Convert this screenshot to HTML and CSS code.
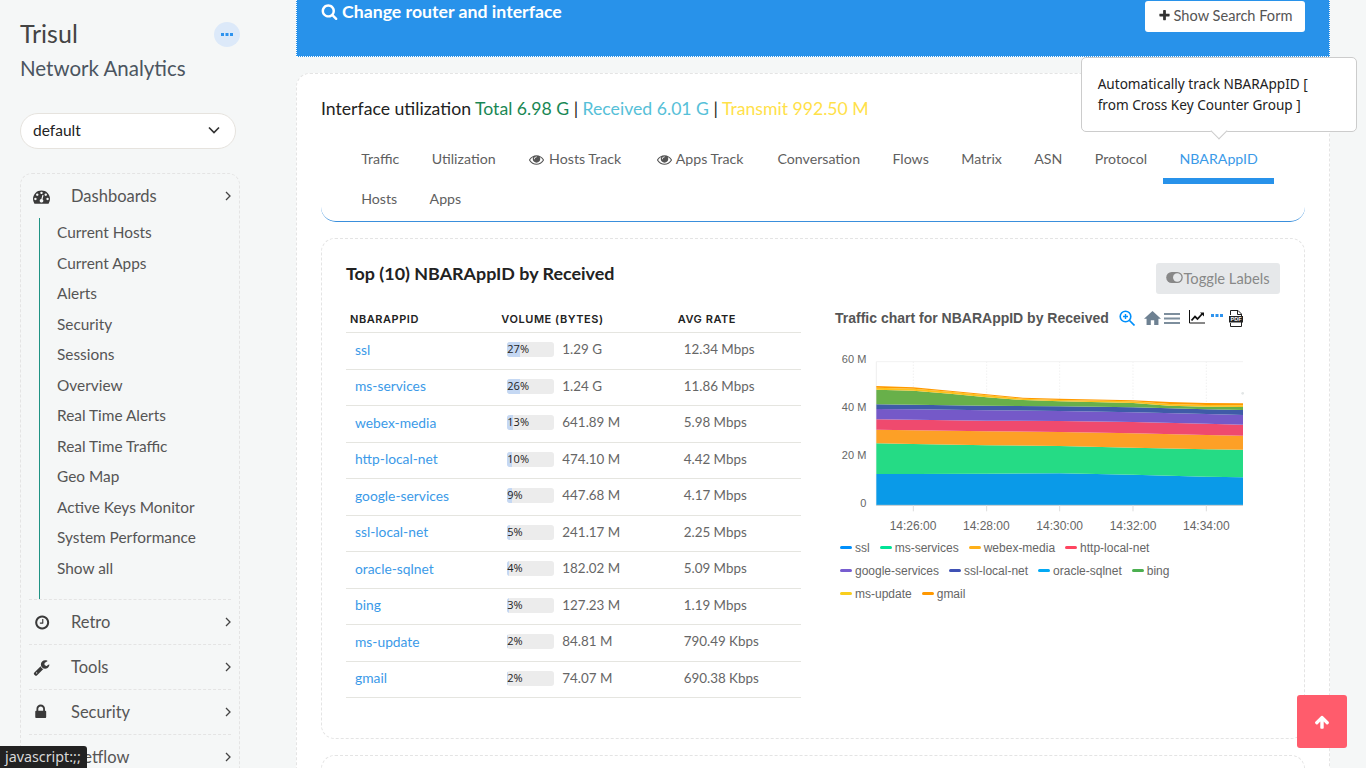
FILE: index.html
```html
<!DOCTYPE html>
<html lang="en">
<head>
  <meta charset="UTF-8" />
  <meta name="viewport" content="width=device-width, initial-scale=1.0" />
  <title>Trisul Network Analytics</title>
  <link rel="stylesheet" href="styles.css">
</head>
<body>
  <aside class="sidebar">
    <div class="brand">
      <div>
        <div class="brand-name">Trisul</div>
        <div class="brand-sub">Network Analytics</div>
      </div>
      <span class="more-btn"><svg viewBox="0 0 12 4" width="12" height="4"><path d="M0 0h3v3H0zM4.500 0h3v3h-3zM9 0h3v3H9z"/></svg></span>
    </div>

    <div class="context-select">
      <span>default</span>
      <svg viewBox="0 0 12 8" width="12" height="8"><path d="M1 1.500l5 5 5-5" fill="none" stroke="#333" stroke-width="1.700"/></svg>
    </div>

    <nav class="menu">
      <div class="menu-group">
        <a class="menu-row" href="#">
          <svg class="menu-icon" viewBox="0 0 1792 1792"><path d="M384 1152q0-53-37.500-90.500t-90.500-37.500-90.500 37.500-37.500 90.500 37.500 90.500 90.500 37.500 90.500-37.500 37.500-90.500zm192-448q0-53-37.500-90.500t-90.500-37.500-90.500 37.500-37.500 90.500 37.500 90.500 90.500 37.500 90.500-37.500 37.500-90.500zm428 481l101-382q6-26-7.500-48.500t-38.500-29.500-48 6.500-30 39.500l-101 382q-60 5-107 43.500t-63 98.500q-20 77 20 146t117 89 146-20 89-117q16-60-6-117t-72-91zm660-33q0-53-37.500-90.500t-90.500-37.500-90.500 37.500-37.500 90.500 37.500 90.500 90.500 37.500 90.500-37.500 37.500-90.500zm-640-640q0-53-37.500-90.500t-90.500-37.500-90.500 37.500-37.500 90.500 37.500 90.500 90.500 37.500 90.500-37.500 37.500-90.500zm448 192q0-53-37.500-90.500t-90.500-37.500-90.500 37.500-37.500 90.500 37.500 90.500 90.500 37.500 90.500-37.500 37.500-90.500zm320 448q0 261-141 483-19 29-54 29h-1402q-35 0-54-29-141-221-141-483 0-182 71-348t191-286 286-191 348-71 348 71 286 191 191 286 71 348z"/></svg>
          <span class="menu-label">Dashboards</span>
          <svg class="chevron" viewBox="0 0 6 10"><path d="M1 1l4 4-4 4" fill="none" stroke="#444" stroke-width="1.300"/></svg>
        </a>
        <ul class="submenu">
          <li>Current Hosts</li>
          <li>Current Apps</li>
          <li>Alerts</li>
          <li>Security</li>
          <li>Sessions</li>
          <li>Overview</li>
          <li>Real Time Alerts</li>
          <li>Real Time Traffic</li>
          <li>Geo Map</li>
          <li>Active Keys Monitor</li>
          <li>System Performance</li>
          <li>Show all</li>
        </ul>
      </div>
      <div class="menu-group">
        <a class="menu-row" href="#">
          <svg class="menu-icon" viewBox="-110 -36 1865 1865"><path d="M1024 544v448q0 14-9 23t-23 9h-320q-14 0-23-9t-9-23v-64q0-14 9-23t23-9h224v-352q0-14 9-23t23-9h64q14 0 23 9t9 23zm416 352q0-148-73-273t-198-198-273-73-273 73-198 198-73 273 73 273 198 198 273 73 273-73 198-198 73-273zm224 0q0 209-103 385.500t-279.500 279.500-385.500 103-385.500-103-279.500-279.500-103-385.500 103-385.500 279.500-279.500 385.500-103 385.500 103 279.500 279.500 103 385.500z"/></svg>
          <span class="menu-label">Retro</span>
          <svg class="chevron" viewBox="0 0 6 10"><path d="M1 1l4 4-4 4" fill="none" stroke="#444" stroke-width="1.300"/></svg>
        </a>
      </div>
      <div class="menu-group">
        <a class="menu-row" href="#">
          <svg class="menu-icon" viewBox="0 0 1792 1792"><path d="M448 1472q0-26-19-45t-45-19-45 19-19 45 19 45 45 19 45-19 19-45zm644-420l-682 682q-37 37-90 37-52 0-91-37l-106-108q-38-36-38-90 0-53 38-91l681-681q39 98 114.500 173.500t173.500 114.500zm634-435q0 39-23 106-47 134-164.500 217.500t-258.500 83.500q-185 0-316.500-131.500t-131.500-316.500 131.500-316.500 316.500-131.500q58 0 121.500 16.500t107.500 46.500q16 11 16 28t-16 28l-293 169v224l193 107q5-3 79-48.500t135.500-81 70.500-35.500q15 0 23.500 10t8.500 25z"/></svg>
          <span class="menu-label">Tools</span>
          <svg class="chevron" viewBox="0 0 6 10"><path d="M1 1l4 4-4 4" fill="none" stroke="#444" stroke-width="1.300"/></svg>
        </a>
      </div>
      <div class="menu-group">
        <a class="menu-row" href="#">
          <svg class="menu-icon" viewBox="90 0 1536 1792"><path d="M520 704h512v-192q0-106-75-181t-181-75-181 75-75 181v192zm832 96v576q0 40-28 68t-68 28h-960q-40 0-68-28t-28-68v-576q0-40 28-68t68-28h32v-192q0-184 132-316t316-132 316 132 132 316v192h32q40 0 68 28t28 68z"/></svg>
          <span class="menu-label">Security</span>
          <svg class="chevron" viewBox="0 0 6 10"><path d="M1 1l4 4-4 4" fill="none" stroke="#444" stroke-width="1.300"/></svg>
        </a>
      </div>
      <div class="menu-group">
        <a class="menu-row" href="#">
          <span class="menu-icon"></span>
          <span class="menu-label">Netflow</span>
          <svg class="chevron" viewBox="0 0 6 10"><path d="M1 1l4 4-4 4" fill="none" stroke="#444" stroke-width="1.300"/></svg>
        </a>
      </div>
    </nav>
  </aside>

  <main class="content">
    <section class="search-bar">
      <h2 class="search-title">
        <svg viewBox="0 0 1792 1792" width="17" height="17"><path d="M1216 832q0-185-131.500-316.500t-316.500-131.500-316.500 131.500-131.500 316.500 131.500 316.500 316.500 131.500 316.500-131.500 131.500-316.500zm512 832q0 52-38 90t-90 38q-54 0-90-38l-343-342q-179 124-399 124-143 0-273.500-55.500t-225-150-150-225-55.500-273.500 55.500-273.500 150-225 225-150 273.500-55.500 273.500 55.500 225 150 150 225 55.500 273.500q0 220-124 399l343 343q37 37 37 90z"/></svg>
        Change router and interface
      </h2>
      <button class="search-btn">
        <svg viewBox="0 0 1792 1792" width="13" height="13"><path d="M1600 736v192q0 40-28 68t-68 28h-416v416q0 40-28 68t-68 28h-192q-40 0-68-28t-28-68v-416h-416q-40 0-68-28t-28-68v-192q0-40 28-68t68-28h416v-416q0-40 28-68t68-28h192q40 0 68 28t28 68v416h416q40 0 68 28t28 68z"/></svg>
        Show Search Form
      </button>
    </section>

    <section class="panel">
      <h3 class="util-line">Interface utilization <span class="util-total">Total 6.98 G</span> | <span class="util-recv">Received 6.01 G</span> | <span class="util-xmit">Transmit 992.50 M</span></h3>

      <div class="tabs">
        <a class="tab" href="#">Traffic</a>
        <a class="tab" href="#">Utilization</a>
        <a class="tab tab-track" href="#"><svg class="eye" viewBox="0 0 1792 1792"><path d="M1664 960q-152-236-381-353 61 104 61 225 0 185-131.500 316.500t-316.500 131.500-316.500-131.500-131.500-316.500q0-121 61-225-229 117-381 353 133 205 333.500 326.500t434.500 121.500 434.500-121.500 333.500-326.500zm-720-384q0-20-14-34t-34-14q-125 0-214.500 89.500t-89.500 214.500q0 20 14 34t34 14 34-14 14-34q0-86 61-147t147-61q20 0 34-14t14-34zm848 384q0 34-20 69-140 230-376.500 368.500t-499.500 138.500-499.500-139-376.500-368q-20-35-20-69t20-69q140-229 376.500-368t499.500-139 499.500 139 376.500 368q20 35 20 69z"/></svg> Hosts Track</a>
        <a class="tab tab-track" href="#"><svg class="eye" viewBox="0 0 1792 1792"><path d="M1664 960q-152-236-381-353 61 104 61 225 0 185-131.500 316.500t-316.500 131.500-316.500-131.500-131.500-316.500q0-121 61-225-229 117-381 353 133 205 333.500 326.500t434.500 121.500 434.500-121.500 333.500-326.500zm-720-384q0-20-14-34t-34-14q-125 0-214.500 89.500t-89.500 214.500q0 20 14 34t34 14 34-14 14-34q0-86 61-147t147-61q20 0 34-14t14-34zm848 384q0 34-20 69-140 230-376.500 368.500t-499.500 138.500-499.500-139-376.500-368q-20-35-20-69t20-69q140-229 376.500-368t499.500-139 499.500 139 376.500 368q20 35 20 69z"/></svg> Apps Track</a>
        <a class="tab" href="#">Conversation</a>
        <a class="tab" href="#">Flows</a>
        <a class="tab" href="#">Matrix</a>
        <a class="tab" href="#">ASN</a>
        <a class="tab" href="#">Protocol</a>
        <a class="tab active" href="#">NBARAppID
          <span class="popover">Automatically track NBARAppID [ from Cross Key Counter Group ]</span>
        </a>
        <a class="tab" href="#">Hosts</a>
        <a class="tab" href="#">Apps</a>
      </div>

      <div class="card">
        <div class="card-head">
          <h4 class="card-title">Top (10) NBARAppID by Received</h4>
          <button class="toggle-btn">
            <svg viewBox="0 0 18 12" width="17" height="11"><path d="M6 0h6a6 6 0 0 1 0 12H6A6 6 0 0 1 6 0z" fill="#888"/><circle cx="12" cy="6" r="4.600" fill="#e6e8ea"/></svg>Toggle Labels
          </button>
        </div>

        <div class="card-body">
          <table class="top-table">
            <thead>
              <tr><th>NBARAppID</th><th>Volume (Bytes)</th><th>Avg Rate</th></tr>
            </thead>
            <tbody>
              <tr><td><a href="#">ssl</a></td><td><div class="vol"><div class="bar"><div class="bar-fill" style="width:27%"></div><span class="bar-text">27%</span></div>1.29 G</div></td><td>12.34 Mbps</td></tr>
              <tr><td><a href="#">ms-services</a></td><td><div class="vol"><div class="bar"><div class="bar-fill" style="width:26%"></div><span class="bar-text">26%</span></div>1.24 G</div></td><td>11.86 Mbps</td></tr>
              <tr><td><a href="#">webex-media</a></td><td><div class="vol"><div class="bar"><div class="bar-fill" style="width:13%"></div><span class="bar-text">13%</span></div>641.89 M</div></td><td>5.98 Mbps</td></tr>
              <tr><td><a href="#">http-local-net</a></td><td><div class="vol"><div class="bar"><div class="bar-fill" style="width:10%"></div><span class="bar-text">10%</span></div>474.10 M</div></td><td>4.42 Mbps</td></tr>
              <tr><td><a href="#">google-services</a></td><td><div class="vol"><div class="bar"><div class="bar-fill" style="width:9%"></div><span class="bar-text">9%</span></div>447.68 M</div></td><td>4.17 Mbps</td></tr>
              <tr><td><a href="#">ssl-local-net</a></td><td><div class="vol"><div class="bar"><div class="bar-fill" style="width:5%"></div><span class="bar-text">5%</span></div>241.17 M</div></td><td>2.25 Mbps</td></tr>
              <tr><td><a href="#">oracle-sqlnet</a></td><td><div class="vol"><div class="bar"><div class="bar-fill" style="width:4%"></div><span class="bar-text">4%</span></div>182.02 M</div></td><td>5.09 Mbps</td></tr>
              <tr><td><a href="#">bing</a></td><td><div class="vol"><div class="bar"><div class="bar-fill" style="width:3%"></div><span class="bar-text">3%</span></div>127.23 M</div></td><td>1.19 Mbps</td></tr>
              <tr><td><a href="#">ms-update</a></td><td><div class="vol"><div class="bar"><div class="bar-fill" style="width:2%"></div><span class="bar-text">2%</span></div>84.81 M</div></td><td>790.49 Kbps</td></tr>
              <tr><td><a href="#">gmail</a></td><td><div class="vol"><div class="bar"><div class="bar-fill" style="width:2%"></div><span class="bar-text">2%</span></div>74.07 M</div></td><td>690.38 Kbps</td></tr>
            </tbody>
          </table>

          <div class="chart-box">
            <div class="chart-head">
              <span class="chart-title">Traffic chart for NBARAppID by Received</span>
              <svg class="tool tool-zoom" viewBox="0 0 16 16"><circle cx="6.500" cy="6.500" r="5.300" fill="none" stroke="#008ffb" stroke-width="1.600"/><path d="M10.500 10.500L15.500 15.500" stroke="#008ffb" stroke-width="1.700"/><path d="M4 6.500h5M6.500 4v5" stroke="#008ffb" stroke-width="1.400"/></svg>
              <svg class="tool tool-home" viewBox="2 3 20 17"><path d="M10 20v-6h4v6h5v-8h3L12 3 2 12h3v8z" fill="#6e8192"/></svg>
              <svg class="tool tool-bars" viewBox="0 0 16 13"><path d="M0 1h16v2H0zM0 5.500h16v2H0zM0 10h16v2H0z" fill="#7d8e9d"/></svg>
              <svg class="tool tool-line" viewBox="0 0 16 14"><path d="M.500 0v13H16" fill="none" stroke="#111" stroke-width="1"/><path d="M2.500 10.500L6 6.500l2.500 2.500 5-5.500" fill="none" stroke="#111" stroke-width="1.800"/><path d="M11 2.500h4v4z" fill="#111"/></svg>
              <svg class="tool tool-dots" viewBox="0 0 12 4"><path d="M0 0h3v3H0zM4.500 0h3v3h-3zM9 0h3v3H9z" fill="#2e93ee"/></svg>
              <svg class="tool tool-pdf" viewBox="0 0 14 17"><path d="M1.500 5V.500h7.500l3.500 3.500v12.500h-11V13" fill="none" stroke="#222"/><path d="M8.500.500V4.500h4" fill="none" stroke="#222"/><rect x="0" y="6" width="14" height="6.500" fill="#222"/><text x="7" y="11.300" class="pdf-text">PDF</text></svg>
            </div>

            <svg class="chart" viewBox="0 120 1290 585">
              <g class="grid-v">
                <path d="M265 185V616M485 185V616M704 185V616M924 185V616M1144 185V616"/>
              </g>
              <path d="M154 185H1254" stroke="#f2f2f2" stroke-width="3"/>
              <path d="M154 185V616" stroke="#eee" stroke-width="3"/>

              <polygon fill="#0a9ae8" points="154,522 265,522 485,521 704,520 924,524 1144,530 1254,532 1254,616 154,616"/>
              <polygon fill="#25db85" points="154,430 265,432 485,436 704,438 924,443 1144,448 1254,449 1254,532 1144,530 924,524 704,520 485,521 265,522 154,522"/>
              <polygon fill="#fda026" points="154,389 265,391 485,394 704,396 924,400 1144,405 1254,407 1254,449 1144,448 924,443 704,438 485,436 265,432 154,430"/>
              <polygon fill="#ef4a6e" points="154,358 265,359 485,362 704,363 924,366 1144,371 1254,374 1254,407 1144,405 924,400 704,396 485,394 265,391 154,389"/>
              <polygon fill="#7559c8" points="154,327 265,328 485,331 704,333 924,337 1144,342 1254,345 1254,374 1144,371 924,366 704,363 485,362 265,359 154,358"/>
              <polygon fill="#3f5ba8" points="154,313 265,314 485,317 704,319 924,322 1144,328 1254,330 1254,345 1144,342 924,337 704,333 485,331 265,328 154,327"/>
              <polygon fill="#68b04a" points="154,269 265,272 375,281 485,292 594,300 704,304 924,309 1034,317 1144,320 1254,321 1254,330 1144,328 924,322 704,319 485,317 265,314 154,313"/>
              <polygon fill="#fdc21c" points="154,263 265,266 375,275 485,286 594,296 704,300 924,304 1034,312 1144,315 1254,316 1254,321 1144,320 1034,317 924,309 704,304 594,300 485,292 375,281 265,272 154,269"/>
              <polygon fill="#ff9a00" points="154,258 265,262 375,272 485,283 594,293 704,296 924,301 1034,306 1144,309 1254,310 1254,316 1144,315 1034,312 924,304 704,300 594,296 485,286 375,275 265,266 154,263"/>
              <circle cx="1253" cy="280" r="4" fill="#e2e6e6"/>

              <path d="M154 616H1254" stroke="#ccc" stroke-width="3"/>
              <path d="M265 616v18M485 616v18M704 616v18M924 616v18M1144 616v18" stroke="#ddd" stroke-width="3"/>

              <g class="y-labels">
                <text x="124" y="189">60 M</text>
                <text x="124" y="334">40 M</text>
                <text x="124" y="477">20 M</text>
                <text x="124" y="620">0</text>
              </g>
              <g class="x-labels">
                <text x="264" y="691">14:26:00</text>
                <text x="484" y="691">14:28:00</text>
                <text x="704" y="691">14:30:00</text>
                <text x="924" y="691">14:32:00</text>
                <text x="1144" y="691">14:34:00</text>
              </g>
            </svg>

            <div class="legend">
              <span class="legend-item"><i class="legend-mark mark-ssl"></i>ssl</span>
              <span class="legend-item"><i class="legend-mark mark-ms"></i>ms-services</span>
              <span class="legend-item"><i class="legend-mark mark-webex"></i>webex-media</span>
              <span class="legend-item"><i class="legend-mark mark-http"></i>http-local-net</span>
              <span class="legend-item"><i class="legend-mark mark-google"></i>google-services</span>
              <span class="legend-item"><i class="legend-mark mark-local"></i>ssl-local-net</span>
              <span class="legend-item"><i class="legend-mark mark-oracle"></i>oracle-sqlnet</span>
              <span class="legend-item"><i class="legend-mark mark-bing"></i>bing</span>
              <span class="legend-item"><i class="legend-mark mark-update"></i>ms-update</span>
              <span class="legend-item"><i class="legend-mark mark-gmail"></i>gmail</span>
            </div>
          </div>
        </div>
      </div>

      <div class="card card-next"></div>
    </section>
  </main>

  <a class="to-top" href="#">
    <svg viewBox="0 0 1792 1792" width="16" height="16"><path d="M1675 971q0 51-37 90l-75 75q-38 38-91 38-54 0-90-38l-294-293v704q0 52-37.500 84.500t-90.500 32.500h-128q-53 0-90.500-32.500t-37.500-84.500v-704l-294 293q-36 38-90 38t-90-38l-75-75q-38-38-38-90 0-53 38-91l651-651q35-37 90-37 54 0 91 37l651 651q37 39 37 91z"/></svg>
  </a>
  <div class="status-link">javascript:;;</div>
</body>
</html>
```

FILE: styles.css
```css
/* Page */
html, body {
  height: 768px;
  overflow: hidden;
}
body {
  margin: 0;
  display: flex;
  align-items: flex-start;
  font-family: Lato, "Noto Sans", sans-serif;
  font-size: 15px;
  color: #555;
  background: #f5f7f7;
}
a {
  color: inherit;
  text-decoration: none;
}
h2, h3, h4 {
  margin: 0;
}

/* Sidebar */
.sidebar {
  flex: 0 0 280px;
  box-sizing: border-box;
  width: 280px;
  padding: 18px 40px 0 20px;
}
.brand {
  display: flex;
  justify-content: space-between;
  align-items: flex-start;
}
.brand-name {
  font-size: 25px;
  line-height: 31px;
  color: #444;
}
.brand-sub {
  font-size: 20.500px;
  line-height: 28px;
  margin: 5px 0 1px;
  color: #4b5560;
}
.more-btn {
  display: flex;
  align-items: center;
  justify-content: center;
  width: 26px;
  height: 25px;
  margin-top: 4px;
  border-radius: 50%;
  background: #dce9f9;
}
.more-btn svg {
  fill: #2e93ee;
}
.context-select {
  display: flex;
  justify-content: space-between;
  align-items: center;
  box-sizing: border-box;
  width: 216px;
  height: 36px;
  margin-top: 30px;
  padding: 0 15px 2px 12px;
  border: 1px solid #e6e3de;
  border-radius: 18px;
  background: #fff;
  color: #222;
  font-size: 15.500px;
}
.menu {
  box-sizing: border-box;
  width: 220px;
  margin-top: 24px;
  padding: 0 8px;
  border: 1px dashed #e4e4e4;
  border-radius: 12px;
}
.menu-group + .menu-group {
  border-top: 1px dashed #e4e4e4;
}
.menu-row {
  display: flex;
  align-items: center;
  height: 44px;
  padding-left: 4px;
  font-size: 16.500px;
  color: #555;
}
.menu-icon {
  flex: 0 0 17px;
  width: 17px;
  height: 17px;
  fill: #3a3a3a;
}
.menu-label {
  flex: 1;
  margin-left: 21px;
}
.chevron {
  width: 6px;
  height: 10px;
}
.submenu {
  list-style: none;
  margin: 0 0 0 10px;
  padding: 0 0 15px 17px;
  border-left: 1px solid #1f9384;
}
.submenu li {
  height: 30.500px;
  line-height: 28.500px;
  font-size: 15.400px;
  color: #555;
}

/* Main column */
.content {
  flex: 1;
  min-width: 0;
  padding: 0 36px 0 16px;
}
.search-bar {
  display: flex;
  justify-content: space-between;
  box-sizing: border-box;
  height: 57px;
  padding: 1px 24px 0;
  border: 1px dotted #fff;
  border-top: 0;
  background: #2892ea;
}
.search-title {
  display: flex;
  align-items: center;
  gap: 4px;
  height: 20px;
  font-size: 17.700px;
  font-weight: 700;
  color: #fff;
}
.search-title svg {
  fill: #fff;
}
.search-btn {
  display: flex;
  align-items: center;
  justify-content: center;
  gap: 3px;
  width: 160px;
  height: 31px;
  padding: 0 0 2px;
  border: 0;
  border-radius: 3px;
  background: #fff;
  color: #555;
  font-family: inherit;
  font-size: 14.600px;
}
.search-btn svg {
  fill: #333;
}
.panel {
  box-sizing: border-box;
  height: 800px;
  margin-top: 16px;
  padding: 24px 24px 0;
  border: 1px dashed #e4e4e4;
  border-radius: 14px;
  background: #fff;
}
.util-line {
  height: 22px;
  line-height: 22px;
  font-size: 17.650px;
  font-weight: 400;
  color: #222;
}
.util-total { color: #198754; }
.util-recv { color: #56c0d8; }
.util-xmit { color: #ffe14a; }

/* Tabs */
.tabs {
  display: flex;
  flex-wrap: wrap;
  align-content: flex-start;
  box-sizing: border-box;
  height: 83px;
  margin-top: 19px;
  padding-left: 24px;
  border-bottom: 1px solid #3a8fdc;
  border-radius: 0 0 15px 15px;
}
.tab {
  position: relative;
  box-sizing: border-box;
  height: 45px;
  margin-bottom: -5px;
  padding: 0 16.200px;
  line-height: 40px;
  font-size: 14.200px;
  color: #5f5f5f;
  white-space: nowrap;
}
.tab-track {
  margin-left: 1.500px;
  margin-right: 1.500px;
}
.tab.active {
  border-bottom: 6px solid #2892ea;
  color: #3b9ae8;
}
.eye {
  width: 15px;
  height: 15px;
  margin-right: 1px;
  vertical-align: -3px;
  fill: #555;
}
.popover {
  position: absolute;
  bottom: 100%;
  left: 50%;
  z-index: 10;
  box-sizing: border-box;
  width: 276px;
  margin-bottom: 7px;
  padding: 15px 16px 16px;
  transform: translateX(-50%);
  border: 1px solid #ccc;
  border-radius: 5px;
  background: #fff;
  color: #222;
  font-family: "Noto Sans", sans-serif;
  font-size: 13.600px;
  line-height: 21px;
  white-space: normal;
}
.popover::after {
  content: "";
  position: absolute;
  left: 50%;
  bottom: -6px;
  width: 11px;
  height: 11px;
  margin-left: -6px;
  transform: rotate(45deg);
  border-right: 1px solid #ccc;
  border-bottom: 1px solid #ccc;
  background: #fff;
}

/* Cards */
.card {
  box-sizing: border-box;
  height: 501px;
  margin-top: 16px;
  padding: 24px;
  border: 1px dashed #e4e4e4;
  border-radius: 14px;
  background: #fff;
}
.card-next {
  height: 100px;
}
.card-head {
  display: flex;
  justify-content: space-between;
  align-items: flex-start;
  height: 31px;
  margin-bottom: 11px;
}
.card-title {
  line-height: 20px;
  font-size: 17.900px;
  font-weight: 700;
  color: #222;
}
.toggle-btn {
  display: flex;
  align-items: center;
  justify-content: center;
  width: 124px;
  height: 31px;
  padding: 0 0 2px;
  border: 0;
  border-radius: 3px;
  background: #e6e8ea;
  color: #888;
  font-family: inherit;
  font-size: 14.700px;
}
.card-body {
  display: flex;
  gap: 34px;
}

/* Table */
.top-table {
  flex: 0 0 455px;
  width: 455px;
  table-layout: fixed;
  border-collapse: collapse;
  font-size: 13.400px;
}
.top-table th {
  height: 27px;
  padding: 0 0 0 5px;
  border-bottom: 1px solid #e5e5e0;
  text-align: left;
  font-family: Inter, "Noto Sans", sans-serif;
  font-size: 11px;
  font-weight: 600;
  letter-spacing: .55px;
  text-transform: uppercase;
  color: #222;
}
.top-table th:nth-child(1) { width: 146px; padding-left: 4px; }
.top-table th:nth-child(2) { width: 171px; }
.top-table th:nth-child(3) { width: 123px; }
.top-table td {
  height: 32.500px;
  padding: 0 0 3px 11px;
  border-bottom: 1px solid #e5e5e0;
  color: #666;
}
.top-table td:nth-child(1) { padding-left: 9px; }
.top-table td a {
  color: #3b9ae8;
  font-size: 13.800px;
}
.vol {
  display: flex;
  align-items: center;
  gap: 8px;
}
.bar {
  position: relative;
  width: 47px;
  height: 15px;
  margin-top: 1px;
  overflow: hidden;
  border-radius: 3px;
  background: #ececec;
}
.bar-fill {
  height: 100%;
  background: #c5d8f3;
}
.bar-text {
  position: absolute;
  top: 0;
  left: 0;
  font-family: "Open Sans", sans-serif;
  font-size: 11px;
  line-height: 14px;
  color: #222;
}

/* Chart */
.chart-box {
  flex: 1;
  min-width: 0;
}
.chart-head {
  display: flex;
  align-items: center;
  height: 26px;
}
.chart-title {
  width: 284px;
  font-family: "Liberation Sans", Arial, sans-serif;
  font-size: 14px;
  font-weight: 700;
  color: #555;
}
.tool {
  height: auto;
}
.tool-zoom { width: 16px; margin-right: 9px; }
.tool-home { width: 17px; margin-right: 3px; }
.tool-bars { width: 16px; margin-right: 9px; }
.tool-line { width: 16px; margin-right: 6px; margin-top: -3px; }
.tool-dots { width: 12px; margin-right: 6px; margin-top: -4px; }
.tool-pdf { width: 14px; }
.pdf-text {
  font-family: "Liberation Sans", Arial, sans-serif;
  font-size: 5.500px;
  font-weight: 700;
  fill: #fff;
  text-anchor: middle;
}
.chart {
  display: block;
  width: 430px;
  height: 195px;
  margin: 9px 0 0 -10px;
}
.grid-v path {
  fill: none;
  stroke: #e0e0e0;
  stroke-width: 2;
  stroke-dasharray: 3 6;
}
.y-labels text,
.x-labels text {
  font-family: "Liberation Sans", Arial, sans-serif;
  font-size: 33px;
  fill: #666;
}
.y-labels text {
  text-anchor: end;
}
.x-labels text {
  font-size: 36px;
  text-anchor: middle;
}
.legend {
  display: flex;
  flex-wrap: wrap;
  column-gap: 10px;
  box-sizing: border-box;
  width: 405px;
  margin-top: 1px;
  padding-left: 5px;
  font-family: "Liberation Sans", Arial, sans-serif;
  font-size: 12px;
  color: #666;
}
.legend-item {
  display: flex;
  align-items: center;
  height: 23px;
}
.legend-mark {
  width: 12px;
  height: 3px;
  margin-right: 3px;
  border-radius: 2px;
}
.mark-ssl { background: #008ffb; }
.mark-ms { background: #00e396; }
.mark-webex { background: #feb019; }
.mark-http { background: #ff4560; }
.mark-google { background: #775dd0; }
.mark-local { background: #3f51b5; }
.mark-oracle { background: #03a9f4; }
.mark-bing { background: #4caf50; }
.mark-update { background: #f9ce1d; }
.mark-gmail { background: #ff9800; }

/* Floating bits */
.to-top {
  position: fixed;
  left: 1297px;
  top: 695px;
  display: flex;
  align-items: center;
  justify-content: center;
  width: 50px;
  height: 53px;
  border-radius: 3px;
  background: #ff5c6c;
}
.to-top svg {
  fill: #fff;
}
.status-link {
  position: fixed;
  left: 0;
  bottom: 0;
  box-sizing: border-box;
  width: 87px;
  height: 22px;
  padding-left: 5px;
  line-height: 22px;
  border-top-right-radius: 3px;
  background: #222;
  color: #d8d8d8;
  font-family: "Noto Sans", sans-serif;
  font-size: 14.300px;
  white-space: nowrap;
}
```
